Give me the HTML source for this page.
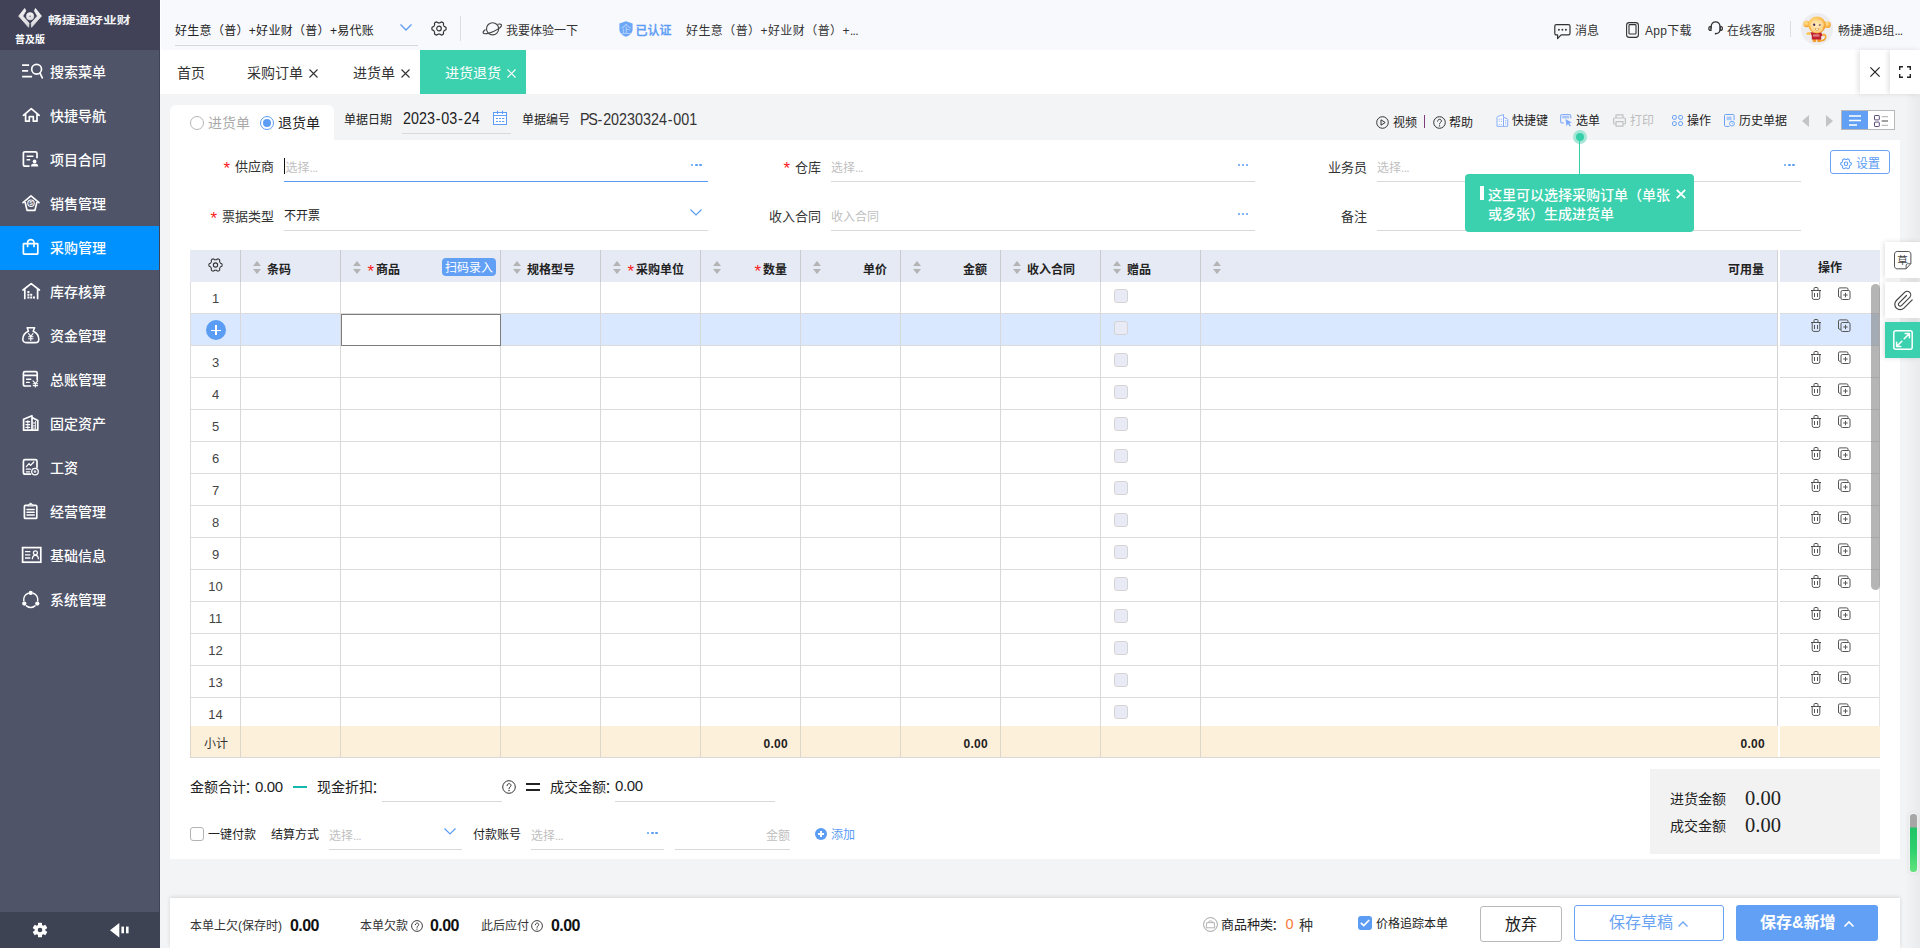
<!DOCTYPE html>
<html lang="zh-CN">
<head>
<meta charset="utf-8">
<title>进货退货 - 畅捷通好业财</title>
<style>
*{box-sizing:border-box;margin:0;padding:0}
html,body{width:1920px;height:948px;overflow:hidden}
body{position:relative;background:#f3f4f6;font-family:"Liberation Sans","Noto Sans CJK SC",sans-serif;font-size:12px;color:#333;line-height:1}
.a{position:absolute;white-space:nowrap}
svg{position:absolute;overflow:visible}
/* sidebar */
#side{position:absolute;left:0;top:0;width:160px;height:948px;background:#4f5469;border-right:1px solid #404258}
#side .logo{position:absolute;left:0;top:0;width:159px;height:50px;background:#414257}
#side .bot{position:absolute;left:0;top:912px;width:159px;height:36px;background:#3e4354}
#side .mi{position:absolute;left:0;width:160px;height:44px;color:#fff;font-size:14px;font-weight:500}
#side .mi span{position:absolute;left:50px;top:15px}
#side .mi.on{background:#0091ff;width:159px}
#side .mi svg{left:21px;top:12px;width:20px;height:20px}
/* top bar */
#top{position:absolute;left:160px;top:0;width:1760px;height:50px;background:#f8f9fd;border-left:1px solid #fff}
#tabs{position:absolute;left:160px;top:50px;width:1760px;height:44px;background:#fff}
#tabs .t{position:absolute;top:16px;font-size:14px;color:#333}
#tabs .on{position:absolute;left:260px;top:0;width:106px;height:44px;background:#3bd1ae}
/* main card */
#main{position:absolute;left:0;top:0;width:1920px;height:948px}
.card{position:absolute;background:#fff}
.lbl{margin-top:0;position:absolute;white-space:nowrap;color:#333;font-size:13px}
.ph{margin-top:2px;position:absolute;white-space:nowrap;color:#bfbfbf;font-size:12px}
.ul{position:absolute;height:1px;background:#d9d9d9}
.red{color:#f5222d}
.dots{margin-top:1px;position:absolute;width:11px;height:3px}
.dots i{position:absolute;top:0;width:2.4px;height:2.4px;border-radius:50%;background:#5b9cf5}
/* table */
#tbl{position:absolute;left:0;top:0;width:1920px;height:948px}
.thead{position:absolute;left:190px;top:250px;width:1690px;height:32px;background:#e6eaf5}
.trow{position:absolute;left:190px;width:1690px;height:32px;background:#fff;border-bottom:1px solid #dcdcdc}
.trow.hl{background:#d9e8fe}
.vl{position:absolute;top:250px;width:1px;height:507px;background:#d9d9d9}
.rn{position:absolute;left:191px;width:49px;height:32px;line-height:34px;text-align:center;font-size:13px;color:#444}
.plus{position:absolute;left:206px;width:20px;height:20px;border-radius:50%;background:#5b9cf5}
.plus i{position:absolute;left:5px;top:9.5px;width:10px;height:1.4px;background:#fff}
.plus b{position:absolute;left:9.3px;top:5px;width:1.4px;height:10px;background:#fff}
.ck{position:absolute;left:1114px;width:14px;height:14px;border:1px solid #d4d4d4;border-radius:3px;background:#e8ebf5}
.ic-trash{left:1811px;width:10px;height:13px}
.ic-copy{left:1838px;width:13px;height:13px}
.th{position:absolute;top:263.600px;font-size:12px;font-weight:700;color:#222;white-space:nowrap}
.sort{position:absolute;top:261px;width:8px;height:13px}
.sort:before{content:"";position:absolute;left:0;top:0;border:4px solid transparent;border-top:0;border-bottom:5.5px solid #b4b4b4}
.sort:after{content:"";position:absolute;left:0;top:7.5px;border:4px solid transparent;border-bottom:0;border-top:5.5px solid #b4b4b4}
/* footer */
#foot{position:absolute;left:170px;top:898px;width:1730px;height:50px;background:#fff;box-shadow:0 -1px 4px rgba(0,0,0,.12)}
.num{position:absolute;white-space:nowrap;font-size:16.500px;transform:scaleX(.868);transform-origin:0 0;color:#222}
.num i{font-style:normal;margin:0 1.050px 0 .9px}
.num b{font-weight:400;letter-spacing:-1.400px}
.st{position:absolute;font-size:17px;color:#fb1a1a;line-height:1}
.cn{margin-left:-1.500px;margin-right:1.500px}
.el{letter-spacing:-.7px}

</style>
</head>
<body>

<div id="side">
<div class="logo">
<svg style="left:18px;top:8px;width:24.200px;height:20px" viewBox="0 0 24.200 20"><defs><linearGradient id="lg1" x1="0" y1="0" x2="0" y2="1"><stop offset="0" stop-color="#f4f4f6"/><stop offset="1" stop-color="#d9d9de"/></linearGradient></defs><g fill="url(#lg1)" stroke="url(#lg1)" stroke-width="0.800" stroke-linejoin="round"><path d="M6.700 0.500L0.700 8.100l9.900 11.200.4-4.200L4.800 8.100l3-5.300z"/><path d="M17.500 0.500l6 7.600-9.900 11.200-.4-4.200 6.200-7-3-5.300z"/><circle cx="12.100" cy="8.300" r="3.700" stroke-width="0.600"/></g><circle cx="12.100" cy="8.300" r="0.750" fill="#6a6c80"/></svg>
<div class="a" style="left:48px;top:15.500px;font-size:10.300px;font-weight:700;color:#f2f2f4;transform:scaleX(1.335);transform-origin:0 0;letter-spacing:0">畅捷通好业财</div>
<div class="a" style="left:15px;top:35px;font-size:10px;font-weight:700;color:#fff">普及版</div>
</div>
<div class="mi" style="top:50px"><svg viewBox="0 0 20 20" fill="none" stroke="#fff" stroke-width="1.700"><path d="M1.100 3.100h7M1.100 8.900h6M1.100 14.700h10"/><circle cx="15.600" cy="7.300" r="4.900"/><path d="M19 11.200l2.300 4.600" stroke-linecap="round"/></svg><span>搜索菜单</span></div>
<div class="mi" style="top:94px"><svg viewBox="0 0 20 20" fill="none" stroke="#fff" stroke-width="1.700" stroke-linejoin="round" stroke-linecap="round"><path d="M2.400 9.300l7.900-6.700 7.900 6.700M4.600 8.200v7h3.700v-4.600h4v4.600H16v-7"/></svg><span>快捷导航</span></div>
<div class="mi" style="top:138px"><svg viewBox="0 0 20 20" fill="none" stroke="#fff" stroke-width="1.700" stroke-linejoin="round"><path d="M8.600 16.200H4c-1 0-1.600-.6-1.600-1.600V3.400c0-1 .6-1.600 1.600-1.600h10.400c1 0 1.600.6 1.600 1.600v4.800"/><path d="M5.600 6.200h6.800M5.600 9.800h3.600" stroke-width="1.400"/><circle cx="13.600" cy="11.400" r="1.900" fill="#fff" stroke="none"/><path d="M10 16.600c0-2.400 1.600-3 3.600-3s3.600.6 3.600 3z" fill="#fff" stroke="none"/></svg><span>项目合同</span></div>
<div class="mi" style="top:182px"><svg viewBox="0 0 20 20" fill="none" stroke="#fff" stroke-width="1.700" stroke-linejoin="round" stroke-linecap="round"><path d="M2 8.600L10 1.800l8 6.800M4.200 8.600l1.900 7.800h7.800l1.900-7.800"/><circle cx="10" cy="9.200" r="3.200" stroke-width="1.100"/><text x="10" y="11.400" font-size="5.500" font-weight="700" text-anchor="middle" fill="#fff" stroke="none" font-family="Liberation Sans,sans-serif">S</text></svg><span>销售管理</span></div>
<div class="mi on" style="top:226px"><svg viewBox="0 0 20 20" fill="none" stroke="#fff" stroke-width="1.700" stroke-linejoin="round"><rect x="2.400" y="5.600" width="14.400" height="10.600" rx="0.600"/><path d="M6.600 8.400V4.600c0-4 6.400-4 6.400 0v3.800" stroke-linecap="round"/></svg><span>采购管理</span></div>
<div class="mi" style="top:270px"><svg viewBox="0 0 20 20" fill="none" stroke="#fff" stroke-width="1.700" stroke-linejoin="round" stroke-linecap="round"><path d="M2 8l8.200-6.300L18.400 8M3.800 7.400v9M16.600 7.400v9"/><path d="M6.400 15.600h8.200M6.400 12.800h5.400M6.400 10h2.600" stroke-width="2" stroke-dasharray="2 0.800" stroke-linecap="butt"/></svg><span>库存核算</span></div>
<div class="mi" style="top:314px"><svg viewBox="0 0 20 20" fill="none" stroke="#fff" stroke-width="1.600" stroke-linejoin="round" stroke-linecap="round"><path d="M6.200 1.800h7.400l-1.400 3.400c3 1.400 5.600 4.600 5.600 8 0 2.200-1.400 3.400-3.400 3.400H5.200c-2 0-3.400-1.200-3.400-3.400 0-3.400 2.600-6.600 5.600-8z"/><path d="M7.600 7.600l2.200 2.800 2.200-2.800M9.800 10.400v4M7.600 10.800h4.400M7.600 12.800h4.400" stroke-width="1.100"/></svg><span>资金管理</span></div>
<div class="mi" style="top:358px"><svg viewBox="0 0 20 20" fill="none" stroke="#fff" stroke-width="1.700" stroke-linejoin="round" stroke-linecap="round"><path d="M9.400 16H4c-1 0-1.600-.6-1.600-1.600V3.200c0-1 .6-1.600 1.600-1.600h10.600c1 0 1.600.6 1.600 1.600v6.600M2.400 5.400h13.800"/><path d="M5.600 9.200h4.200M5.600 12.400h2.600" stroke-width="1.400"/><path d="M12 10.800l2.400 2.600 2.400-2.600M14.400 13.400v3.600M12.200 13.800h4.400M12.200 15.600h4.400" stroke-width="1.100"/></svg><span>总账管理</span></div>
<div class="mi" style="top:402px"><svg viewBox="0 0 20 20" fill="none" stroke="#fff" stroke-width="1.700" stroke-linejoin="round" stroke-linecap="round"><path d="M2.600 16.200V5.200l8.400-3.400v14.400M11 3.400l5.800 3v9.800M2.600 16.200h14.200"/><path d="M5 7.800h3.600M5 10.600h3.600M5 13.400h3.600M13 8.600v0.600M13 11.400v0.600M13 14v0.200" stroke-width="1.400"/><path d="M6.800 6.400v8.400M14.600 7.400v8" stroke-width="0.900"/></svg><span>固定资产</span></div>
<div class="mi" style="top:446px"><svg viewBox="0 0 20 20" fill="none" stroke="#fff" stroke-width="1.700" stroke-linejoin="round" stroke-linecap="round"><path d="M9.400 16.200H4c-1 0-1.600-.6-1.600-1.600V3.200c0-1 .6-1.600 1.600-1.600h10.400c1 0 1.600.6 1.600 1.600v6"/><path d="M5.400 8.600l2.600-3 1.600 1.800 3.200-3.400" stroke-width="1.300"/><path d="M5.400 11.200h4M5.400 13.800h3.200" stroke-width="1.300"/><circle cx="14" cy="13.600" r="3.300" stroke-width="1.300"/><circle cx="14" cy="13.600" r="1.300" fill="#fff" stroke="none" opacity=".8"/></svg><span>工资</span></div>
<div class="mi" style="top:490px"><svg viewBox="0 0 20 20" fill="none" stroke="#fff" stroke-width="1.700" stroke-linejoin="round" stroke-linecap="round"><path d="M6.800 3.400H4.400c-.6 0-1 .4-1 1v11c0 .6.400 1 1 1h10.400c.6 0 1-.4 1-1v-11c0-.6-.4-1-1-1h-2.400"/><path d="M6.800 3.600c0-.8.400-1.200 1.200-1.200h.4c0-1.600 2.400-1.600 2.400 0h.4c.8 0 1.200.4 1.200 1.200z" fill="#fff" stroke-width="1"/><path d="M6 7.400h7.200M6 10.200h7.200M6 13h7.200" stroke-width="1.500"/></svg><span>经营管理</span></div>
<div class="mi" style="top:534px"><svg viewBox="0 0 20 20" fill="none" stroke="#fff" stroke-width="1.700" stroke-linejoin="miter"><rect x="1.600" y="1.600" width="18.200" height="14.600"/><path d="M4 5.600h5.400M4 8.800h5.400M4 12h5.400" stroke-width="1.300"/><circle cx="14.400" cy="6.800" r="2" stroke-width="1.300"/><path d="M11.400 13.200c0-2.600 1.200-3.800 3-3.800s3 1.200 3 3.800" stroke-width="1.300"/></svg><span>基础信息</span></div>
<div class="mi" style="top:578px"><svg viewBox="0 0 20 20" fill="none" stroke="#fff" stroke-width="1.500" stroke-linecap="round"><path d="M12.200 3.200a7 7 0 0 1 4.500 7.600M14 15.800a7 7 0 0 1-8.600 0M2.800 10.800a7 7 0 0 1 4.500-7.600"/><circle cx="9.700" cy="2.900" r="2.150" fill="#fff" stroke="none"/><circle cx="3.300" cy="13.600" r="2.150" fill="#fff" stroke="none"/><circle cx="16.300" cy="13.600" r="2.150" fill="#fff" stroke="none"/></svg><span>系统管理</span></div>
<div class="bot">
<svg style="left:32.100px;top:10.300px;width:16px;height:16px" viewBox="-8 -8 16 16"><g fill="#fff"><circle r="5.400"/><rect x="-2" y="-7.300" width="4" height="4.500" rx="0.600" transform="rotate(0)"/><rect x="-2" y="-7.300" width="4" height="4.500" rx="0.600" transform="rotate(60)"/><rect x="-2" y="-7.300" width="4" height="4.500" rx="0.600" transform="rotate(120)"/><rect x="-2" y="-7.300" width="4" height="4.500" rx="0.600" transform="rotate(180)"/><rect x="-2" y="-7.300" width="4" height="4.500" rx="0.600" transform="rotate(240)"/><rect x="-2" y="-7.300" width="4" height="4.500" rx="0.600" transform="rotate(300)"/></g><circle r="2.300" fill="#3e4354"/></svg>
<svg style="left:110px;top:10.800px;width:19px;height:14.400px" viewBox="0 0 19 14.400"><path fill="#fff" d="M0 7.200L9.300 0v14.400z"/><rect x="11.400" y="3.600" width="2.600" height="6.700" fill="#fff"/><rect x="16" y="3.600" width="2.600" height="6.700" fill="#fff"/></svg>
</div>
</div>

<div id="top"><div style="position:absolute;left:-1px;top:0;width:1760px;height:50px">
<div class="a" style="left:15px;top:25px;font-size:12px;color:#222;letter-spacing:.3px">好生意（普）+好业财（普）+易代账</div>
<div class="ul" style="left:15px;top:45px;width:243px;background:#d6d8dd"></div>
<svg style="left:240px;top:24px;width:12px;height:7px" viewBox="0 0 12 7" fill="none" stroke="#5b9cf5" stroke-width="1.300"><path d="M0.500 0.500L6 6l5.500-5.500"/></svg>
<svg style="left:271px;top:21px;width:16px;height:15px" viewBox="0 0 16 15" fill="none" stroke="#333" stroke-width="1.200" stroke-linejoin="round"><path d="M15.10 7.50 L15.07 8.12 L14.88 8.71 L14.13 9.14 L13.37 9.45 L13.08 9.87 L12.85 10.30 L12.59 10.71 L12.38 11.17 L12.49 11.99 L12.49 12.85 L12.07 13.32 L11.55 13.65 L11.00 13.93 L10.39 14.07 L9.64 13.63 L8.99 13.13 L8.49 13.08 L8.00 13.10 L7.51 13.08 L7.01 13.13 L6.36 13.63 L5.61 14.07 L5.00 13.93 L4.45 13.65 L3.93 13.32 L3.51 12.85 L3.51 11.99 L3.62 11.17 L3.41 10.71 L3.15 10.30 L2.92 9.87 L2.63 9.45 L1.87 9.14 L1.12 8.71 L0.93 8.12 L0.90 7.50 L0.93 6.88 L1.12 6.29 L1.87 5.86 L2.63 5.55 L2.92 5.13 L3.15 4.70 L3.41 4.29 L3.62 3.83 L3.51 3.01 L3.51 2.15 L3.93 1.68 L4.45 1.35 L5.00 1.07 L5.61 0.93 L6.36 1.37 L7.01 1.87 L7.51 1.92 L8.00 1.90 L8.49 1.92 L8.99 1.87 L9.64 1.37 L10.39 0.93 L11.00 1.07 L11.55 1.35 L12.07 1.68 L12.49 2.15 L12.49 3.01 L12.38 3.83 L12.59 4.29 L12.85 4.70 L13.08 5.13 L13.37 5.55 L14.13 5.86 L14.88 6.29 L15.07 6.88Z" transform="translate(0 0)"/><circle cx="8" cy="7.500" r="2.300"/></svg>
<div class="a" style="left:300px;top:16px;width:1px;height:25px;background:#dcdde2"></div>
<svg style="left:322px;top:21px;width:20px;height:16px" viewBox="0 0 20 16" fill="none" stroke="#444" stroke-width="1.100"><circle cx="10.600" cy="7.800" r="6.100"/><ellipse cx="10.300" cy="7.900" rx="10" ry="2.900" transform="rotate(-24 10.300 7.900)" pathLength="100" stroke-dasharray="60 31 9"/></svg>
<div class="a" style="left:346px;top:25px;font-size:12px;color:#333">我要体验一下</div>
<svg style="left:459px;top:21px;width:14px;height:16px" viewBox="0 0 14 16"><path d="M7 0.200l6.600 2.200v5.800c0 3.400-2.600 6-6.600 7.600C3 14.200 0.400 11.600 0.400 8.200V2.400z" fill="#6ca6f6"/><text x="7" y="12" font-size="10.500" font-weight="400" text-anchor="middle" fill="#fff" fill-opacity=".55" font-family="Liberation Sans,Noto Sans CJK SC,sans-serif">企</text></svg>
<div class="a" style="left:475.500px;top:25px;font-size:12px;font-weight:500;color:#5b9cf5;-webkit-text-stroke:.3px #5b9cf5">已认证</div>
<div class="a" style="left:526px;top:25px;font-size:12px;color:#333;letter-spacing:.42px">好生意（普）+好业财（普）+<span class="el">...</span></div>

<svg style="left:1394px;top:24px;width:17px;height:16px" viewBox="0 0 17 16" fill="none" stroke="#333" stroke-width="1.200" stroke-linejoin="round"><path d="M2.400 0.700h12c1 0 1.600.6 1.600 1.600v7c0 1-.6 1.600-1.600 1.600H7.200l-3.600 3.600V10.900H2.400c-1 0-1.600-.6-1.600-1.600v-7c0-1 .6-1.600 1.600-1.600z"/><circle cx="4.900" cy="5.800" r="0.950" fill="#333" stroke="none"/><circle cx="8.400" cy="5.800" r="0.950" fill="#333" stroke="none"/><circle cx="11.900" cy="5.800" r="0.950" fill="#333" stroke="none"/></svg>
<div class="a" style="left:1415px;top:25px;font-size:12px;color:#333">消息</div>
<svg style="left:1465.500px;top:22px;width:13px;height:16px" viewBox="0 0 13 16" fill="none" stroke="#333" stroke-width="1.100"><rect x="0.600" y="0.600" width="11.800" height="14.800" rx="2.600"/><rect x="3" y="2.600" width="7" height="9.400" rx="0.800"/></svg>
<div class="a" style="left:1485px;top:25px;font-size:12px;color:#333;letter-spacing:.3px">App下载</div>
<svg style="left:1548px;top:21px;width:15px;height:14px" viewBox="0 0 15 14" fill="none" stroke="#333" stroke-width="1.200" stroke-linecap="round"><path d="M3.200 7.200V5.400c0-6 8.800-6 8.800 0v3.400c0 2.400-1.600 3.600-4 3.800"/><path d="M3 5.400c-1.400 0-2.200.8-2.200 2s.8 2 2.200 2zM12.200 5.400c1.400 0 2.200.8 2.200 2s-.8 2-2.200 2z"/><circle cx="7.600" cy="12.600" r="0.900" fill="#333" stroke="none"/></svg>
<div class="a" style="left:1567px;top:25px;font-size:12px;color:#333">在线客服</div>
<div class="a" style="left:1630px;top:21px;width:1px;height:16px;background:#dcdde2"></div>
<svg style="left:1641px;top:13px;width:32px;height:32px" viewBox="0 0 32 32">
<defs><radialGradient id="mk1" cx=".4" cy=".35" r=".7"><stop offset="0" stop-color="#ffe39a"/><stop offset=".6" stop-color="#fbbd4e"/><stop offset="1" stop-color="#ee9426"/></radialGradient><radialGradient id="mk2" cx=".45" cy=".4" r=".7"><stop offset="0" stop-color="#ffeec0"/><stop offset="1" stop-color="#fbc976"/></radialGradient></defs>
<circle cx="16" cy="16" r="16" fill="#ededf0"/>
<g transform="translate(0 -0.600)"><circle cx="5.700" cy="11.600" r="3.300" fill="url(#mk1)"/><circle cx="26.500" cy="12.300" r="3.300" fill="url(#mk1)"/>
<path d="M18.600 28c4 1 6.600-1.200 6-4.400-.3-1.600-2.200-2-2.800-.8" stroke="#f3a535" stroke-width="1.800" fill="none" stroke-linecap="round"/>
<path d="M11.600 26.600h3.600v2.600c0 .8-3.600.8-3.600 0zM16.200 26.600h3.600v2.600c0 .8-3.600.8-3.600 0z" fill="#f29b2c"/>
<path d="M9.400 20.400c-1.600-.6-3-.6-3.800.2-.6.800 0 1.800 1.200 1.800l2.800.2z" fill="#fbc54a"/>
<path d="M9.400 19.800h11l.8 3.400-1 .6v3.200H10.800v-3.400z" fill="#c01f2c"/>
<ellipse cx="16" cy="12.600" rx="8.800" ry="8.400" fill="url(#mk1)"/>
<path d="M9.200 12.400c0-3 2.600-4.800 4.800-4.600 1 .1 1.600.6 2 1.200.4-.6 1-1.100 2-1.200 2.200-.2 4.800 1.600 4.800 4.600 0 1.200-.4 2-1 2.600.6 3-2.200 5.200-5.800 5.200s-6.400-2.200-5.800-5.200c-.6-.6-1-1.400-1-2.600z" fill="url(#mk2)"/>
<ellipse cx="13.200" cy="12.300" rx="1.100" ry="1.200" fill="#4a2a5a"/><ellipse cx="18.800" cy="12.600" rx="1.100" ry=".8" fill="#6a4a6a"/>
<path d="M13.800 16.200c.8 2.400 3.600 2.400 4.400 0z" fill="#d9781c"/><rect x="15" y="16.200" width="2" height="1.200" fill="#fff"/>
<rect x="12" y="22" width="6.400" height="2.200" fill="#e9a0a8" opacity=".75"/></g>
</svg>
<div class="a" style="left:1678px;top:25px;font-size:12px;color:#333;letter-spacing:.1px">畅捷通B组<span class="el">...</span></div>
</div></div>

<div id="tabs">
<div class="t" style="left:17px">首页</div>
<div class="t" style="left:87px">采购订单</div>
<svg style="left:149px;top:19.300px;width:9px;height:9px" viewBox="0 0 9 9" stroke="#333" stroke-width="1.100"><path d="M0.500 0.500l8 8M8.500 0.500l-8 8"/></svg>
<div class="t" style="left:193px">进货单</div>
<svg style="left:240.500px;top:19.300px;width:9px;height:9px" viewBox="0 0 9 9" stroke="#333" stroke-width="1.100"><path d="M0.500 0.500l8 8M8.500 0.500l-8 8"/></svg>
<div class="on"></div>
<div class="t" style="left:285px;color:#fff">进货退货</div>
<svg style="left:347px;top:19.300px;width:9px;height:9px" viewBox="0 0 9 9" stroke="#fff" stroke-width="1.100"><path d="M0.500 0.500l8 8M8.500 0.500l-8 8"/></svg>
<div class="a" style="left:1700px;top:0;width:30px;height:44px;background:#fff;box-shadow:-2px 0 5px rgba(0,0,0,.11)"></div>
<div class="a" style="left:1730px;top:0;width:30px;height:44px;background:#fff;box-shadow:-2px 0 5px rgba(0,0,0,.11)"></div>
<svg style="left:1710px;top:17px;width:10px;height:10px" viewBox="0 0 10 10" stroke="#222" stroke-width="1.200"><path d="M0.400 0.400l9.200 9.200M9.600 0.400l-9.200 9.200"/></svg>
<svg style="left:1739px;top:16px;width:12px;height:12px" viewBox="0 0 12 12" fill="none" stroke="#222" stroke-width="1.400"><path d="M0.700 4V0.700H4M8 0.700h3.300V4M11.300 8v3.300H8M4 11.300H0.700V8"/></svg>
</div>

<div id="main">
<div class="a" style="left:1904px;top:94px;width:16px;height:854px;background:linear-gradient(to right,rgba(0,0,0,0),rgba(0,0,0,.04))"></div>
<!-- card -->
<div class="card" style="left:170px;top:105px;width:164px;height:40px;border-radius:6px 6px 0 0"></div>
<div class="card" style="left:170px;top:140px;width:1730px;height:719px"></div>
<!-- radios -->
<div class="a" style="left:190px;top:116px;width:14px;height:14px;border:1px solid #b5b5b5;border-radius:50%;background:#fff"></div>
<div class="a" style="left:208px;top:116px;font-size:14px;color:#aaa">进货单</div>
<div class="a" style="left:260px;top:116px;width:14px;height:14px;border:1px solid #5b9cf5;border-radius:50%;background:#fff"></div>
<div class="a" style="left:263px;top:119px;width:8px;height:8px;border-radius:50%;background:#5b9cf5"></div>
<div class="a" style="left:278px;top:116px;font-size:14px;color:#222">退货单</div>
<!-- date / code -->
<div class="a" style="left:344px;top:114px;font-size:12px;color:#222">单据日期</div>
<div class="num" style="left:403px;top:110px">2023<i>-</i>03<i>-</i>24</div>
<div class="ul" style="left:402px;top:133px;width:109px"></div>
<svg style="left:493px;top:110px;width:14px;height:15px" viewBox="0 0 14 15" fill="none" stroke="#5f9df5" stroke-width="1"><rect x="0.500" y="2.500" width="13" height="12" fill="#fff"/><path d="M0.500 5.500h13"/><path d="M4.500 0.800v3.200M9.500 0.800v3.200" stroke-width="1.100"/><path d="M3 8.500h2M6 8.500h2M9 8.500h2.300M3 11.500h2M6 11.500h2M9 11.500h2.300"/></svg>
<div class="a" style="left:522px;top:114px;font-size:12px;color:#222">单据编号</div>
<div class="num" style="left:580px;top:111px;color:#333"><b>PS</b><i>-</i>20230324<i>-</i>001</div>
<!-- toolbar right -->
<svg style="left:1376px;top:115.500px;width:13px;height:13px" viewBox="0 0 13 13" fill="none" stroke="#333" stroke-width="1"><circle cx="6.500" cy="6.500" r="5.800"/><path d="M5 3.800v5.400l4.200-2.700z" stroke-linejoin="round"/></svg>
<div class="a" style="left:1393px;top:117px;font-size:12px;color:#222">视频</div>
<div class="a" style="left:1424px;top:115px;width:1px;height:13px;background:#7a3b78"></div>
<svg style="left:1432.500px;top:115.500px;width:13px;height:13px" viewBox="0 0 13 13" fill="none" stroke="#333" stroke-width="1"><circle cx="6.500" cy="6.500" r="5.800"/><path d="M4.600 5.200c0-2.600 3.800-2.600 3.800-.2 0 1.400-1.900 1.500-1.900 3" stroke-linecap="round"/><circle cx="6.500" cy="9.900" r="0.700" fill="#333" stroke="none"/></svg>
<div class="a" style="left:1449px;top:117px;font-size:12px;color:#222">帮助</div>

<svg style="left:1496px;top:114px;width:12.500px;height:13px" viewBox="0 0 12.500 13" fill="none" stroke="#86aef8" stroke-width="1" stroke-linejoin="round"><path d="M1 12.300V3.600Q1 2.800 1.800 2.500L7.500 0.600V3.300L11.200 4.800Q11.700 5 11.700 5.500V12.300Z" fill="#fff"/><path d="M7.500 3.300V12.300"/><path d="M3.200 4.600v4M5.300 4.600v4" stroke-dasharray="1.300 0.700" stroke-width="0.900"/><path d="M2.600 10.300h3.400" stroke-dasharray="1.200 0.900" stroke-width="0.900"/><path d="M9 6.600h1.400M9 8.300h1.400M9 10h1.400" stroke-width="0.800"/></svg>
<div class="a" style="left:1512px;top:114.500px;font-size:12px;color:#222">快捷键</div>
<svg style="left:1560px;top:114px;width:12.500px;height:13px" viewBox="0 0 12.500 13" fill="none" stroke="#86aef8" stroke-width="1.100" stroke-linejoin="round"><path d="M3.700 8.900H2.100Q0.600 8.900 0.600 7.400V2Q0.600 0.500 2.100 0.500H9.300Q10.800 0.500 10.800 2V4.600"/><rect x="2.100" y="1.700" width="7.200" height="2.700" fill="#a9c4fb" stroke="none"/><path d="M5.500 4.900l6.300 3.500-2.500.9 1.700 2.500-1.200.8-1.700-2.500-1.700 1.900z" fill="#7faaf8" stroke="none"/></svg>
<div class="a" style="left:1576px;top:114.500px;font-size:12px;color:#222">选单</div>
<svg style="left:1613px;top:114px;width:13px;height:13px" viewBox="0 0 13 13" fill="none" stroke="#c2c2c2" stroke-width="1.200" stroke-linejoin="round"><path d="M3 4V0.800h7V4M3 10H1.600C1 10 .6 9.600.6 9V5c0-.6.400-1 1-1h9.800c.6 0 1 .4 1 1v4c0 .6-.4 1-1 1H10"/><rect x="3" y="7.600" width="7" height="4.600"/></svg>
<div class="a" style="left:1630px;top:114.500px;font-size:12px;color:#bdbdbd">打印</div>
<svg style="left:1671.500px;top:115px;width:11px;height:11px" viewBox="0 0 11 11" fill="none" stroke="#6aa3f4" stroke-width="1"><rect x="0.500" y="0.500" width="3.800" height="3.800" rx="1.300"/><rect x="6.700" y="0.500" width="3.800" height="3.800" rx="1.300"/><rect x="0.500" y="6.700" width="3.800" height="3.800" rx="1.300"/><rect x="6.700" y="6.700" width="3.800" height="3.800" rx="1.300"/></svg>
<div class="a" style="left:1687px;top:114.500px;font-size:12px;color:#222">操作</div>
<svg style="left:1724px;top:114px;width:11px;height:13px" viewBox="0 0 11 13" fill="none" stroke="#6aa3f4" stroke-width="1" stroke-linejoin="round"><path d="M5.400 12.400H1.400c-.5 0-.9-.4-.9-.9V1.400c0-.5.400-.9.900-.9h7.800c.5 0 .9.400.9.900v4.800"/><path d="M2.600 2.600h5v3.600h-5z" fill="#a9c8f8" stroke="none"/><circle cx="8" cy="9.600" r="2.400" fill="#fff"/><path d="M8 8.300v1.500h1.200" stroke-width="0.800"/></svg>
<div class="a" style="left:1739px;top:114.500px;font-size:12px;color:#222">历史单据</div>
<svg style="left:1802px;top:114.500px;width:7px;height:12px" viewBox="0 0 7 12"><path d="M7 0v12L0 6z" fill="#c4c4c4"/></svg>
<svg style="left:1826px;top:114.500px;width:7px;height:12px" viewBox="0 0 7 12"><path d="M0 0v12L7 6z" fill="#c4c4c4"/></svg>
<div class="a" style="left:1841px;top:109.500px;width:54px;height:20.500px;border:1px solid #b8b8b8;background:#fff"></div>
<div class="a" style="left:1842px;top:110.500px;width:26px;height:18.500px;background:#62a0f6"></div>
<svg style="left:1849px;top:115px;width:12px;height:11px" viewBox="0 0 12 11" stroke="#fff" stroke-width="1.300"><path d="M0 1h12M0 5.500h12M0 10h8"/></svg>
<svg style="left:1874px;top:114.500px;width:14px;height:12px" viewBox="0 0 14 12" fill="none" stroke="#5a4a78" stroke-width="1"><rect x="0.500" y="0.500" width="4.800" height="4.400" rx="0.600"/><rect x="0.500" y="7.100" width="4.800" height="4.400" rx="0.600"/><path d="M7.700 1.700h6.300M7.700 10.300h6.300" stroke="#bdbdbd" stroke-width="1.200"/><path d="M7.700 6h6.300" stroke="#444" stroke-width="1"/></svg>

<!-- form row 1 -->
<div class="st" style="left:223.400px;top:160.300px">*</div>
<div class="lbl" style="left:235px;top:160px">供应商</div>
<div class="a" style="left:284px;top:158px;width:1px;height:16px;background:#111"></div>
<div class="ph" style="left:285.500px;top:160px">选择<span class="el">...</span></div>
<div class="ul" style="left:284px;top:181px;width:424px;background:#5b9cf5"></div>
<div class="dots" style="left:691px;top:163px"><i style="left:0"></i><i style="left:4.200px"></i><i style="left:8.400px"></i></div>

<div class="st" style="left:783.400px;top:160.300px">*</div>
<div class="lbl" style="left:795px;top:161px">仓库</div>
<div class="ph" style="left:831px;top:160px">选择<span class="el">...</span></div>
<div class="ul" style="left:831px;top:181px;width:424px"></div>
<div class="dots" style="left:1237.500px;top:163px"><i style="left:0"></i><i style="left:4.200px"></i><i style="left:8.400px"></i></div>

<div class="lbl" style="left:1328px;top:161px">业务员</div>
<div class="ph" style="left:1377px;top:160px">选择<span class="el">...</span></div>
<div class="ul" style="left:1377px;top:181px;width:424px"></div>
<div class="dots" style="left:1784px;top:163px"><i style="left:0"></i><i style="left:4.200px"></i><i style="left:8.400px"></i></div>

<div class="a" style="left:1830px;top:150px;width:60px;height:24px;border:1px solid #6aa3f4;border-radius:3px;background:#fff"></div>
<svg style="left:1840px;top:157.500px;width:12px;height:11.500px" viewBox="0 0 16 15" fill="none" stroke="#5b9cf5" stroke-width="1.400" stroke-linejoin="round"><path d="M15.10 7.50 L15.07 8.12 L14.88 8.71 L14.13 9.14 L13.37 9.45 L13.08 9.87 L12.85 10.30 L12.59 10.71 L12.38 11.17 L12.49 11.99 L12.49 12.85 L12.07 13.32 L11.55 13.65 L11.00 13.93 L10.39 14.07 L9.64 13.63 L8.99 13.13 L8.49 13.08 L8.00 13.10 L7.51 13.08 L7.01 13.13 L6.36 13.63 L5.61 14.07 L5.00 13.93 L4.45 13.65 L3.93 13.32 L3.51 12.85 L3.51 11.99 L3.62 11.17 L3.41 10.71 L3.15 10.30 L2.92 9.87 L2.63 9.45 L1.87 9.14 L1.12 8.71 L0.93 8.12 L0.90 7.50 L0.93 6.88 L1.12 6.29 L1.87 5.86 L2.63 5.55 L2.92 5.13 L3.15 4.70 L3.41 4.29 L3.62 3.83 L3.51 3.01 L3.51 2.15 L3.93 1.68 L4.45 1.35 L5.00 1.07 L5.61 0.93 L6.36 1.37 L7.01 1.87 L7.51 1.92 L8.00 1.90 L8.49 1.92 L8.99 1.87 L9.64 1.37 L10.39 0.93 L11.00 1.07 L11.55 1.35 L12.07 1.68 L12.49 2.15 L12.49 3.01 L12.38 3.83 L12.59 4.29 L12.85 4.70 L13.08 5.13 L13.37 5.55 L14.13 5.86 L14.88 6.29 L15.07 6.88Z"/><circle cx="8" cy="7.500" r="2.300"/></svg>
<div class="a" style="left:1856px;top:157.500px;font-size:12px;color:#5b9cf5">设置</div>

<!-- form row 2 -->
<div class="st" style="left:210.500px;top:209.900px">*</div>
<div class="lbl" style="left:222px;top:210px">票据类型</div>
<div class="a" style="left:284px;top:210px;font-size:12px;color:#222">不开票</div>
<div class="ul" style="left:284px;top:230px;width:424px"></div>
<svg style="left:690px;top:209px;width:12px;height:7px" viewBox="0 0 12 7" fill="none" stroke="#5b9cf5" stroke-width="1.200"><path d="M0.500 0.500L6 6l5.500-5.500"/></svg>

<div class="lbl" style="left:769px;top:210px">收入合同</div>
<div class="ph" style="left:831px;top:209px">收入合同</div>
<div class="ul" style="left:831px;top:230px;width:424px"></div>
<div class="dots" style="left:1237.500px;top:212px"><i style="left:0"></i><i style="left:4.200px"></i><i style="left:8.400px"></i></div>

<div class="lbl" style="left:1341px;top:210px">备注</div>
<div class="ul" style="left:1377px;top:230px;width:424px"></div>

<!-- guide tooltip -->
<div class="a" style="left:1573px;top:130px;width:14px;height:14px;border-radius:50%;background:#a5e7d6"></div>
<div class="a" style="left:1576px;top:133px;width:8px;height:8px;border-radius:50%;background:#36cfa9"></div>
<div class="a" style="left:1579px;top:141px;width:1px;height:34px;background:#36cfa9"></div>
<div class="a" style="left:1465px;top:174px;width:229px;height:58px;border-radius:4px;background:#3bd1ae"></div>
<div class="a" style="left:1480px;top:186px;width:3.500px;height:14px;background:#fff"></div>
<div class="a" style="left:1488px;top:185.500px;font-size:14px;font-weight:500;color:#fff;line-height:19px;white-space:normal;width:200px;letter-spacing:0">这里可以选择采购订单（单张<br>或多张）生成进货单</div>
<svg style="left:1676px;top:188.500px;width:10px;height:10px" viewBox="0 0 10 10" stroke="#fff" stroke-width="1.800"><path d="M0.800 0.800l8.400 8.400M9.200 0.800L0.800 9.200"/></svg>

<div id="tbl">
<div class="thead"></div>
<div class="trow" style="top:282px"></div>
<div class="rn" style="top:282px">1</div>
<div class="ck" style="top:289px"></div>
<svg class="ic-trash" style="top:287px" viewBox="0 0 10 13"><g fill="none" stroke="#555" stroke-width="1" stroke-linecap="butt" stroke-linejoin="round"><path d="M0 3.500h10M3 3.500V1.600Q3 0.500 4 0.500h2Q7 0.500 7 1.600V3.500M1.200 3.500v7.200q0 1.700 1.700 1.700h4.200q1.700 0 1.700-1.700V3.500M3.500 6v4M6.500 6v4"/></g></svg>
<svg class="ic-copy" style="top:287px" viewBox="0 0 13 13"><g fill="none" stroke="#555" stroke-width="1" stroke-linecap="butt" stroke-linejoin="round"><rect x="3" y="3.500" width="9" height="9" rx="1.400"/><path d="M2.700 10.300H1.800Q0.500 10.300 0.500 9V2.200Q0.500 0.900 1.800 0.900h6.900Q10 0.900 10 2.200v1M7.500 5.800v4.400M5.300 8h4.400"/></g></svg>
<div class="trow hl" style="top:314px"></div>
<div class="plus" style="top:320px"><i></i><b></b></div>
<div class="ck" style="top:321px"></div>
<svg class="ic-trash" style="top:319px" viewBox="0 0 10 13"><g fill="none" stroke="#555" stroke-width="1" stroke-linecap="butt" stroke-linejoin="round"><path d="M0 3.500h10M3 3.500V1.600Q3 0.500 4 0.500h2Q7 0.500 7 1.600V3.500M1.200 3.500v7.200q0 1.700 1.700 1.700h4.200q1.700 0 1.700-1.700V3.500M3.500 6v4M6.500 6v4"/></g></svg>
<svg class="ic-copy" style="top:319px" viewBox="0 0 13 13"><g fill="none" stroke="#555" stroke-width="1" stroke-linecap="butt" stroke-linejoin="round"><rect x="3" y="3.500" width="9" height="9" rx="1.400"/><path d="M2.700 10.300H1.800Q0.500 10.300 0.500 9V2.200Q0.500 0.900 1.800 0.900h6.900Q10 0.900 10 2.200v1M7.500 5.800v4.400M5.300 8h4.400"/></g></svg>
<div class="trow" style="top:346px"></div>
<div class="rn" style="top:346px">3</div>
<div class="ck" style="top:353px"></div>
<svg class="ic-trash" style="top:351px" viewBox="0 0 10 13"><g fill="none" stroke="#555" stroke-width="1" stroke-linecap="butt" stroke-linejoin="round"><path d="M0 3.500h10M3 3.500V1.600Q3 0.500 4 0.500h2Q7 0.500 7 1.600V3.500M1.200 3.500v7.200q0 1.700 1.700 1.700h4.200q1.700 0 1.700-1.700V3.500M3.500 6v4M6.500 6v4"/></g></svg>
<svg class="ic-copy" style="top:351px" viewBox="0 0 13 13"><g fill="none" stroke="#555" stroke-width="1" stroke-linecap="butt" stroke-linejoin="round"><rect x="3" y="3.500" width="9" height="9" rx="1.400"/><path d="M2.700 10.300H1.800Q0.500 10.300 0.500 9V2.200Q0.500 0.900 1.800 0.900h6.900Q10 0.900 10 2.200v1M7.500 5.800v4.400M5.300 8h4.400"/></g></svg>
<div class="trow" style="top:378px"></div>
<div class="rn" style="top:378px">4</div>
<div class="ck" style="top:385px"></div>
<svg class="ic-trash" style="top:383px" viewBox="0 0 10 13"><g fill="none" stroke="#555" stroke-width="1" stroke-linecap="butt" stroke-linejoin="round"><path d="M0 3.500h10M3 3.500V1.600Q3 0.500 4 0.500h2Q7 0.500 7 1.600V3.500M1.200 3.500v7.200q0 1.700 1.700 1.700h4.200q1.700 0 1.700-1.700V3.500M3.500 6v4M6.500 6v4"/></g></svg>
<svg class="ic-copy" style="top:383px" viewBox="0 0 13 13"><g fill="none" stroke="#555" stroke-width="1" stroke-linecap="butt" stroke-linejoin="round"><rect x="3" y="3.500" width="9" height="9" rx="1.400"/><path d="M2.700 10.300H1.800Q0.500 10.300 0.500 9V2.200Q0.500 0.900 1.800 0.900h6.900Q10 0.900 10 2.200v1M7.500 5.800v4.400M5.300 8h4.400"/></g></svg>
<div class="trow" style="top:410px"></div>
<div class="rn" style="top:410px">5</div>
<div class="ck" style="top:417px"></div>
<svg class="ic-trash" style="top:415px" viewBox="0 0 10 13"><g fill="none" stroke="#555" stroke-width="1" stroke-linecap="butt" stroke-linejoin="round"><path d="M0 3.500h10M3 3.500V1.600Q3 0.500 4 0.500h2Q7 0.500 7 1.600V3.500M1.200 3.500v7.200q0 1.700 1.700 1.700h4.200q1.700 0 1.700-1.700V3.500M3.500 6v4M6.500 6v4"/></g></svg>
<svg class="ic-copy" style="top:415px" viewBox="0 0 13 13"><g fill="none" stroke="#555" stroke-width="1" stroke-linecap="butt" stroke-linejoin="round"><rect x="3" y="3.500" width="9" height="9" rx="1.400"/><path d="M2.700 10.300H1.800Q0.500 10.300 0.500 9V2.200Q0.500 0.900 1.800 0.900h6.900Q10 0.900 10 2.200v1M7.500 5.800v4.400M5.300 8h4.400"/></g></svg>
<div class="trow" style="top:442px"></div>
<div class="rn" style="top:442px">6</div>
<div class="ck" style="top:449px"></div>
<svg class="ic-trash" style="top:447px" viewBox="0 0 10 13"><g fill="none" stroke="#555" stroke-width="1" stroke-linecap="butt" stroke-linejoin="round"><path d="M0 3.500h10M3 3.500V1.600Q3 0.500 4 0.500h2Q7 0.500 7 1.600V3.500M1.200 3.500v7.200q0 1.700 1.700 1.700h4.200q1.700 0 1.700-1.700V3.500M3.500 6v4M6.500 6v4"/></g></svg>
<svg class="ic-copy" style="top:447px" viewBox="0 0 13 13"><g fill="none" stroke="#555" stroke-width="1" stroke-linecap="butt" stroke-linejoin="round"><rect x="3" y="3.500" width="9" height="9" rx="1.400"/><path d="M2.700 10.300H1.800Q0.500 10.300 0.500 9V2.200Q0.500 0.900 1.800 0.900h6.900Q10 0.900 10 2.200v1M7.500 5.800v4.400M5.300 8h4.400"/></g></svg>
<div class="trow" style="top:474px"></div>
<div class="rn" style="top:474px">7</div>
<div class="ck" style="top:481px"></div>
<svg class="ic-trash" style="top:479px" viewBox="0 0 10 13"><g fill="none" stroke="#555" stroke-width="1" stroke-linecap="butt" stroke-linejoin="round"><path d="M0 3.500h10M3 3.500V1.600Q3 0.500 4 0.500h2Q7 0.500 7 1.600V3.500M1.200 3.500v7.200q0 1.700 1.700 1.700h4.200q1.700 0 1.700-1.700V3.500M3.500 6v4M6.500 6v4"/></g></svg>
<svg class="ic-copy" style="top:479px" viewBox="0 0 13 13"><g fill="none" stroke="#555" stroke-width="1" stroke-linecap="butt" stroke-linejoin="round"><rect x="3" y="3.500" width="9" height="9" rx="1.400"/><path d="M2.700 10.300H1.800Q0.500 10.300 0.500 9V2.200Q0.500 0.900 1.800 0.900h6.900Q10 0.900 10 2.200v1M7.500 5.800v4.400M5.300 8h4.400"/></g></svg>
<div class="trow" style="top:506px"></div>
<div class="rn" style="top:506px">8</div>
<div class="ck" style="top:513px"></div>
<svg class="ic-trash" style="top:511px" viewBox="0 0 10 13"><g fill="none" stroke="#555" stroke-width="1" stroke-linecap="butt" stroke-linejoin="round"><path d="M0 3.500h10M3 3.500V1.600Q3 0.500 4 0.500h2Q7 0.500 7 1.600V3.500M1.200 3.500v7.200q0 1.700 1.700 1.700h4.200q1.700 0 1.700-1.700V3.500M3.500 6v4M6.500 6v4"/></g></svg>
<svg class="ic-copy" style="top:511px" viewBox="0 0 13 13"><g fill="none" stroke="#555" stroke-width="1" stroke-linecap="butt" stroke-linejoin="round"><rect x="3" y="3.500" width="9" height="9" rx="1.400"/><path d="M2.700 10.300H1.800Q0.500 10.300 0.500 9V2.200Q0.500 0.900 1.800 0.900h6.900Q10 0.900 10 2.200v1M7.500 5.800v4.400M5.300 8h4.400"/></g></svg>
<div class="trow" style="top:538px"></div>
<div class="rn" style="top:538px">9</div>
<div class="ck" style="top:545px"></div>
<svg class="ic-trash" style="top:543px" viewBox="0 0 10 13"><g fill="none" stroke="#555" stroke-width="1" stroke-linecap="butt" stroke-linejoin="round"><path d="M0 3.500h10M3 3.500V1.600Q3 0.500 4 0.500h2Q7 0.500 7 1.600V3.500M1.200 3.500v7.200q0 1.700 1.700 1.700h4.200q1.700 0 1.700-1.700V3.500M3.500 6v4M6.500 6v4"/></g></svg>
<svg class="ic-copy" style="top:543px" viewBox="0 0 13 13"><g fill="none" stroke="#555" stroke-width="1" stroke-linecap="butt" stroke-linejoin="round"><rect x="3" y="3.500" width="9" height="9" rx="1.400"/><path d="M2.700 10.300H1.800Q0.500 10.300 0.500 9V2.200Q0.500 0.900 1.800 0.900h6.900Q10 0.900 10 2.200v1M7.500 5.800v4.400M5.300 8h4.400"/></g></svg>
<div class="trow" style="top:570px"></div>
<div class="rn" style="top:570px">10</div>
<div class="ck" style="top:577px"></div>
<svg class="ic-trash" style="top:575px" viewBox="0 0 10 13"><g fill="none" stroke="#555" stroke-width="1" stroke-linecap="butt" stroke-linejoin="round"><path d="M0 3.500h10M3 3.500V1.600Q3 0.500 4 0.500h2Q7 0.500 7 1.600V3.500M1.200 3.500v7.200q0 1.700 1.700 1.700h4.200q1.700 0 1.700-1.700V3.500M3.500 6v4M6.500 6v4"/></g></svg>
<svg class="ic-copy" style="top:575px" viewBox="0 0 13 13"><g fill="none" stroke="#555" stroke-width="1" stroke-linecap="butt" stroke-linejoin="round"><rect x="3" y="3.500" width="9" height="9" rx="1.400"/><path d="M2.700 10.300H1.800Q0.500 10.300 0.500 9V2.200Q0.500 0.900 1.800 0.900h6.900Q10 0.900 10 2.200v1M7.500 5.800v4.400M5.300 8h4.400"/></g></svg>
<div class="trow" style="top:602px"></div>
<div class="rn" style="top:602px">11</div>
<div class="ck" style="top:609px"></div>
<svg class="ic-trash" style="top:607px" viewBox="0 0 10 13"><g fill="none" stroke="#555" stroke-width="1" stroke-linecap="butt" stroke-linejoin="round"><path d="M0 3.500h10M3 3.500V1.600Q3 0.500 4 0.500h2Q7 0.500 7 1.600V3.500M1.200 3.500v7.200q0 1.700 1.700 1.700h4.200q1.700 0 1.700-1.700V3.500M3.500 6v4M6.500 6v4"/></g></svg>
<svg class="ic-copy" style="top:607px" viewBox="0 0 13 13"><g fill="none" stroke="#555" stroke-width="1" stroke-linecap="butt" stroke-linejoin="round"><rect x="3" y="3.500" width="9" height="9" rx="1.400"/><path d="M2.700 10.300H1.800Q0.500 10.300 0.500 9V2.200Q0.500 0.900 1.800 0.900h6.900Q10 0.900 10 2.200v1M7.500 5.800v4.400M5.300 8h4.400"/></g></svg>
<div class="trow" style="top:634px"></div>
<div class="rn" style="top:634px">12</div>
<div class="ck" style="top:641px"></div>
<svg class="ic-trash" style="top:639px" viewBox="0 0 10 13"><g fill="none" stroke="#555" stroke-width="1" stroke-linecap="butt" stroke-linejoin="round"><path d="M0 3.500h10M3 3.500V1.600Q3 0.500 4 0.500h2Q7 0.500 7 1.600V3.500M1.200 3.500v7.200q0 1.700 1.700 1.700h4.200q1.700 0 1.700-1.700V3.500M3.500 6v4M6.500 6v4"/></g></svg>
<svg class="ic-copy" style="top:639px" viewBox="0 0 13 13"><g fill="none" stroke="#555" stroke-width="1" stroke-linecap="butt" stroke-linejoin="round"><rect x="3" y="3.500" width="9" height="9" rx="1.400"/><path d="M2.700 10.300H1.800Q0.500 10.300 0.500 9V2.200Q0.500 0.900 1.800 0.900h6.900Q10 0.900 10 2.200v1M7.500 5.800v4.400M5.300 8h4.400"/></g></svg>
<div class="trow" style="top:666px"></div>
<div class="rn" style="top:666px">13</div>
<div class="ck" style="top:673px"></div>
<svg class="ic-trash" style="top:671px" viewBox="0 0 10 13"><g fill="none" stroke="#555" stroke-width="1" stroke-linecap="butt" stroke-linejoin="round"><path d="M0 3.500h10M3 3.500V1.600Q3 0.500 4 0.500h2Q7 0.500 7 1.600V3.500M1.200 3.500v7.200q0 1.700 1.700 1.700h4.200q1.700 0 1.700-1.700V3.500M3.500 6v4M6.500 6v4"/></g></svg>
<svg class="ic-copy" style="top:671px" viewBox="0 0 13 13"><g fill="none" stroke="#555" stroke-width="1" stroke-linecap="butt" stroke-linejoin="round"><rect x="3" y="3.500" width="9" height="9" rx="1.400"/><path d="M2.700 10.300H1.800Q0.500 10.300 0.500 9V2.200Q0.500 0.900 1.800 0.900h6.900Q10 0.900 10 2.200v1M7.500 5.800v4.400M5.300 8h4.400"/></g></svg>
<div class="trow" style="top:698px"></div>
<div class="rn" style="top:698px">14</div>
<div class="ck" style="top:705px"></div>
<svg class="ic-trash" style="top:703px" viewBox="0 0 10 13"><g fill="none" stroke="#555" stroke-width="1" stroke-linecap="butt" stroke-linejoin="round"><path d="M0 3.500h10M3 3.500V1.600Q3 0.500 4 0.500h2Q7 0.500 7 1.600V3.500M1.200 3.500v7.200q0 1.700 1.700 1.700h4.200q1.700 0 1.700-1.700V3.500M3.500 6v4M6.500 6v4"/></g></svg>
<svg class="ic-copy" style="top:703px" viewBox="0 0 13 13"><g fill="none" stroke="#555" stroke-width="1" stroke-linecap="butt" stroke-linejoin="round"><rect x="3" y="3.500" width="9" height="9" rx="1.400"/><path d="M2.700 10.300H1.800Q0.500 10.300 0.500 9V2.200Q0.500 0.900 1.800 0.900h6.900Q10 0.900 10 2.200v1M7.500 5.800v4.400M5.300 8h4.400"/></g></svg>
<div class="vl" style="left:240px"></div>
<div class="vl" style="left:340px"></div>
<div class="vl" style="left:500px"></div>
<div class="vl" style="left:600px"></div>
<div class="vl" style="left:700px"></div>
<div class="vl" style="left:800px"></div>
<div class="vl" style="left:900px"></div>
<div class="vl" style="left:1000px"></div>
<div class="vl" style="left:1100px"></div>
<div class="vl" style="left:1200px"></div>
<div class="a" style="left:240px;top:250px;width:1px;height:32px;background:#c9cbd1"></div>
<div class="a" style="left:340px;top:250px;width:1px;height:32px;background:#c9cbd1"></div>
<div class="a" style="left:500px;top:250px;width:1px;height:32px;background:#c9cbd1"></div>
<div class="a" style="left:600px;top:250px;width:1px;height:32px;background:#c9cbd1"></div>
<div class="a" style="left:700px;top:250px;width:1px;height:32px;background:#c9cbd1"></div>
<div class="a" style="left:800px;top:250px;width:1px;height:32px;background:#c9cbd1"></div>
<div class="a" style="left:900px;top:250px;width:1px;height:32px;background:#c9cbd1"></div>
<div class="a" style="left:1000px;top:250px;width:1px;height:32px;background:#c9cbd1"></div>
<div class="a" style="left:1100px;top:250px;width:1px;height:32px;background:#c9cbd1"></div>
<div class="a" style="left:1200px;top:250px;width:1px;height:32px;background:#c9cbd1"></div>
<div class="a" style="left:190px;top:282px;width:1px;height:476px;background:#dcdcdc"></div>
<svg style="left:208px;top:258px;width:15px;height:14px" viewBox="0 0 16 15" fill="none" stroke="#333" stroke-width="1.150" stroke-linejoin="round"><path d="M15.10 7.50 L15.07 8.12 L14.88 8.71 L14.13 9.14 L13.37 9.45 L13.08 9.87 L12.85 10.30 L12.59 10.71 L12.38 11.17 L12.49 11.99 L12.49 12.85 L12.07 13.32 L11.55 13.65 L11.00 13.93 L10.39 14.07 L9.64 13.63 L8.99 13.13 L8.49 13.08 L8.00 13.10 L7.51 13.08 L7.01 13.13 L6.36 13.63 L5.61 14.07 L5.00 13.93 L4.45 13.65 L3.93 13.32 L3.51 12.85 L3.51 11.99 L3.62 11.17 L3.41 10.71 L3.15 10.30 L2.92 9.87 L2.63 9.45 L1.87 9.14 L1.12 8.71 L0.93 8.12 L0.90 7.50 L0.93 6.88 L1.12 6.29 L1.87 5.86 L2.63 5.55 L2.92 5.13 L3.15 4.70 L3.41 4.29 L3.62 3.83 L3.51 3.01 L3.51 2.15 L3.93 1.68 L4.45 1.35 L5.00 1.07 L5.61 0.93 L6.36 1.37 L7.01 1.87 L7.51 1.92 L8.00 1.90 L8.49 1.92 L8.99 1.87 L9.64 1.37 L10.39 0.93 L11.00 1.07 L11.55 1.35 L12.07 1.68 L12.49 2.15 L12.49 3.01 L12.38 3.83 L12.59 4.29 L12.85 4.70 L13.08 5.13 L13.37 5.55 L14.13 5.86 L14.88 6.29 L15.07 6.88Z"/><circle cx="8" cy="7.500" r="2.300"/></svg>
<div class="sort" style="left:253px"></div>
<div class="sort" style="left:353px"></div>
<div class="sort" style="left:513px"></div>
<div class="sort" style="left:613px"></div>
<div class="sort" style="left:713px"></div>
<div class="sort" style="left:813px"></div>
<div class="sort" style="left:913px"></div>
<div class="sort" style="left:1013px"></div>
<div class="sort" style="left:1113px"></div>
<div class="sort" style="left:1213px"></div>
<div class="th" style="left:267px">条码</div>
<div class="th" style="left:376px"><span class="red" style="position:absolute;left:-8.600px;top:-.5px;font-size:17px;font-weight:400;color:#fb1a1a">*</span>商品</div>
<div class="th" style="left:527px">规格型号</div>
<div class="th" style="left:636px"><span class="red" style="position:absolute;left:-8.600px;top:-.5px;font-size:17px;font-weight:400;color:#fb1a1a">*</span>采购单位</div>
<div class="th" style="left:763px"><span class="red" style="position:absolute;left:-8.600px;top:-.5px;font-size:17px;font-weight:400;color:#fb1a1a">*</span>数量</div>
<div class="th" style="left:863px">单价</div>
<div class="th" style="left:963px">金额</div>
<div class="th" style="left:1027px">收入合同</div>
<div class="th" style="left:1127px">赠品</div>
<div class="th" style="left:1728px">可用量</div>
<div class="a" style="left:442px;top:258px;width:54px;height:18px;border-radius:4px;background:#62a0f6;color:#fff;font-size:12px;line-height:20px;text-align:center">扫码录入</div>
<div class="a" style="left:341px;top:314px;width:160px;height:32px;background:#fff;border:1px solid #7d7d7d"></div>
<div class="a" style="left:1777px;top:250px;width:1px;height:508px;background:#d4d4d4"></div>
<div class="a" style="left:1778px;top:250px;width:2px;height:508px;background:#fff"></div>
<div class="a" style="left:1879px;top:282px;width:1px;height:476px;background:#e4e4e4"></div>
<div class="th" style="left:1818px;top:261.600px">操作</div>
<div class="a" style="left:1871px;top:284px;width:8.500px;height:306px;border-radius:4.500px;background:rgba(120,120,120,.55)"></div>
<div class="a" style="left:190px;top:726px;width:1588px;height:31px;background:#fdf0db"></div>
<div class="a" style="left:1780px;top:726px;width:100px;height:31px;background:#fdf0db"></div>
<div class="a" style="left:190px;top:757px;width:1690px;height:1px;background:#d9d9d9"></div>
<div class="a" style="left:240px;top:726px;width:1px;height:31px;background:#dcd6cb"></div>
<div class="a" style="left:340px;top:726px;width:1px;height:31px;background:#dcd6cb"></div>
<div class="a" style="left:500px;top:726px;width:1px;height:31px;background:#dcd6cb"></div>
<div class="a" style="left:600px;top:726px;width:1px;height:31px;background:#dcd6cb"></div>
<div class="a" style="left:700px;top:726px;width:1px;height:31px;background:#dcd6cb"></div>
<div class="a" style="left:800px;top:726px;width:1px;height:31px;background:#dcd6cb"></div>
<div class="a" style="left:900px;top:726px;width:1px;height:31px;background:#dcd6cb"></div>
<div class="a" style="left:1000px;top:726px;width:1px;height:31px;background:#dcd6cb"></div>
<div class="a" style="left:1100px;top:726px;width:1px;height:31px;background:#dcd6cb"></div>
<div class="a" style="left:1200px;top:726px;width:1px;height:31px;background:#dcd6cb"></div>
<div class="a" style="left:190px;top:726px;width:1px;height:32px;background:#dcd6cb"></div>
<div class="a" style="left:204px;top:737.700px;font-size:12px;color:#333">小计</div>
<div class="a" style="right:1132px;top:738px;font-size:12px;font-weight:700;color:#222;letter-spacing:.3px">0.00</div>
<div class="a" style="right:932px;top:738px;font-size:12px;font-weight:700;color:#222;letter-spacing:.3px">0.00</div>
<div class="a" style="right:155px;top:738px;font-size:12px;font-weight:700;color:#222;letter-spacing:.3px">0.00</div>

</div>
<!-- totals row -->
<div class="a" style="left:190px;top:780px;font-size:14px;color:#222">金额合计<span class="cn">：</span></div>
<div class="a" style="left:255px;top:779px;font-size:15px;color:#222;letter-spacing:-.4px">0.00</div>
<div class="a" style="left:293px;top:786px;width:14px;height:2px;background:#14b8b0"></div>
<div class="a" style="left:317px;top:780px;font-size:14px;color:#222">现金折扣<span class="cn">：</span></div>
<div class="ul" style="left:382px;top:801px;width:120px"></div>
<svg style="left:502px;top:780px;width:14px;height:14px" viewBox="0 0 14 14" fill="none" stroke="#333" stroke-width="1"><circle cx="7" cy="7" r="6.300"/><path d="M5 5.600c0-2.600 4-2.600 4-.2 0 1.500-2 1.600-2 3.200" stroke-linecap="round"/><circle cx="7" cy="10.600" r="0.750" fill="#333" stroke="none"/></svg>
<div class="a" style="left:526px;top:783px;width:14px;height:2px;background:#222"></div>
<div class="a" style="left:526px;top:788.500px;width:14px;height:2px;background:#222"></div>
<div class="a" style="left:550px;top:780px;font-size:14px;color:#222">成交金额<span class="cn">：</span></div>
<div class="a" style="left:615px;top:778px;font-size:15px;color:#222;letter-spacing:-.4px">0.00</div>
<div class="ul" style="left:615px;top:801px;width:160px"></div>
<!-- payment row -->
<div class="a" style="left:190px;top:827px;width:14px;height:14px;border:1px solid #b3b3b3;border-radius:3px;background:#fff"></div>
<div class="a" style="left:208px;top:828.700px;font-size:12px;color:#222">一键付款</div>
<div class="a" style="left:271px;top:828.700px;font-size:12px;color:#222">结算方式</div>
<div class="ph" style="left:329px;top:828px">选择<span class="el">...</span></div>
<svg style="left:444px;top:828px;width:12px;height:7px" viewBox="0 0 12 7" fill="none" stroke="#5b9cf5" stroke-width="1.200"><path d="M0.500 0.500L6 6l5.500-5.500"/></svg>
<div class="ul" style="left:329px;top:849px;width:133px"></div>
<div class="a" style="left:473px;top:828.700px;font-size:12px;color:#222">付款账号</div>
<div class="ph" style="left:531px;top:828px">选择<span class="el">...</span></div>
<div class="dots" style="left:647px;top:831px"><i style="left:0"></i><i style="left:4.200px"></i><i style="left:8.400px"></i></div>
<div class="ul" style="left:531px;top:849px;width:133px"></div>
<div class="ph" style="left:766px;top:828px">金额</div>
<div class="ul" style="left:675px;top:849px;width:115px"></div>
<div class="a" style="left:815px;top:828px;width:12px;height:12px;border-radius:50%;background:#5b9cf5"></div>
<div class="a" style="left:818px;top:833.400px;width:6px;height:1.200px;background:#fff"></div>
<div class="a" style="left:820.400px;top:831px;width:1.200px;height:6px;background:#fff"></div>
<div class="a" style="left:831px;top:829px;font-size:12px;color:#5b9cf5">添加</div>
<!-- summary box -->
<div class="a" style="left:1650px;top:769px;width:230px;height:85px;background:#f2f2f2"></div>
<div class="a" style="left:1670px;top:792px;font-size:14px;color:#222">进货金额</div>
<div class="a" style="left:1745px;top:788px;font-size:20.500px;color:#222;font-family:'Liberation Serif',serif">0.00</div>
<div class="a" style="left:1670px;top:819px;font-size:14px;color:#222">成交金额</div>
<div class="a" style="left:1745px;top:815px;font-size:20.500px;color:#222;font-family:'Liberation Serif',serif">0.00</div>
<!-- right float panel -->
<div class="a" style="left:1885px;top:242px;width:35px;height:36px;background:#fff;box-shadow:-1px 0 5px rgba(0,0,0,.13)"></div>
<div class="a" style="left:1885px;top:282px;width:35px;height:36px;background:#fff;box-shadow:-1px 0 5px rgba(0,0,0,.13)"></div>
<div class="a" style="left:1885px;top:322px;width:35px;height:36px;background:#3bd1ae;box-shadow:-1px 0 5px rgba(0,0,0,.13)"></div>
<svg style="left:1894.400px;top:251.300px;width:17.400px;height:18.300px" viewBox="0 0 18 19" fill="none" stroke="#4a4a4a" stroke-width="1"><path d="M3.200 0.500h11.600c1.500 0 2.700 1.200 2.700 2.700v9.800L12.500 18.500H3.200c-1.500 0-2.700-1.200-2.700-2.700V3.200C.5 1.700 1.700.5 3.200.5z"/><path d="M17.400 13.200h-3.400c-.8 0-1.400.6-1.400 1.400v3.800" stroke-width="0.900"/><text x="8.800" y="13.400" font-size="11" text-anchor="middle" fill="#444" stroke="none" font-family="Liberation Sans,Noto Sans CJK SC,sans-serif">草</text></svg>
<svg style="left:1892.600px;top:289.700px;width:21.500px;height:21.500px" viewBox="0 0 24 24" fill="none" stroke="#444" stroke-width="1.300" stroke-linecap="round" stroke-linejoin="round"><path d="M21.440 11.050l-9.190 9.190a6 6 0 0 1-8.490-8.490l9.190-9.190a4 4 0 0 1 5.660 5.660l-9.200 9.190a2 2 0 0 1-2.830-2.830l8.490-8.480"/></svg>
<svg style="left:1892.600px;top:330.400px;width:20px;height:20px" viewBox="0 0 20 20" fill="none" stroke="#fff" stroke-width="1.500" stroke-linejoin="round" stroke-linecap="round"><rect x="0.800" y="0.800" width="18.400" height="18.400" rx="2"/><path d="M11.200 8.800l5-5M12.200 3.600h4.200v4.200M8.800 11.200l-5 5M3.600 12.200v4.200h4.200"/></svg>
<!-- page scrollbar -->
<div class="a" style="left:1910.300px;top:814px;width:6.400px;height:58px;border-radius:3.200px;background:linear-gradient(#a6a6a6 0,#a6a6a6 13px,#1fc466 14px,#2bcf6c 60%,#62e37c 100%);box-shadow:0 0 0 1.500px rgba(255,255,255,.55),0 0 5px rgba(0,0,0,.18)"></div>

</div>
<div id="foot"></div>
<div class="a" style="left:190px;top:919.700px;font-size:12px;color:#333">本单上欠(保存时)</div>
<div class="a" style="left:290px;top:918px;font-size:16px;font-weight:700;color:#111;letter-spacing:-.55px">0.00</div>
<div class="a" style="left:360px;top:919.700px;font-size:12px;color:#333">本单欠款</div>
<svg style="left:410.600px;top:919.800px;width:12px;height:12px" viewBox="0 0 14 14" fill="none" stroke="#333" stroke-width="1.100"><circle cx="7" cy="7" r="6.300"/><path d="M5 5.600c0-2.600 4-2.600 4-.2 0 1.500-2 1.600-2 3.200" stroke-linecap="round"/><circle cx="7" cy="10.600" r="0.800" fill="#333" stroke="none"/></svg>
<div class="a" style="left:430px;top:918px;font-size:16px;font-weight:700;color:#111;letter-spacing:-.55px">0.00</div>
<div class="a" style="left:481px;top:919.700px;font-size:12px;color:#333">此后应付</div>
<svg style="left:530.900px;top:919.800px;width:12px;height:12px" viewBox="0 0 14 14" fill="none" stroke="#333" stroke-width="1.100"><circle cx="7" cy="7" r="6.300"/><path d="M5 5.600c0-2.600 4-2.600 4-.2 0 1.500-2 1.600-2 3.200" stroke-linecap="round"/><circle cx="7" cy="10.600" r="0.800" fill="#333" stroke="none"/></svg>
<div class="a" style="left:551px;top:918px;font-size:16px;font-weight:700;color:#111;letter-spacing:-.55px">0.00</div>

<svg style="left:1203px;top:917px;width:15px;height:15px" viewBox="0 0 15 15" fill="none" stroke="#999" stroke-width="0.900"><circle cx="7.500" cy="7.500" r="6.900"/><path d="M3.800 5.600h7.400l.6 5.200H3.200zM5.600 5.400c0-2.200 3.800-2.200 3.800 0" stroke="#aaa"/></svg>
<div class="a" style="left:1221px;top:918px;font-size:13px;color:#222">商品种类<span class="cn">：</span></div>
<div class="a" style="left:1285.500px;top:917px;font-size:14.500px;color:#f5793b">0</div>
<div class="a" style="left:1299px;top:918px;font-size:14px;color:#333">种</div>
<div class="a" style="left:1358px;top:916px;width:14px;height:14px;border-radius:3px;background:#5b9cf5"></div>
<svg style="left:1360px;top:919px;width:10px;height:8px" viewBox="0 0 9 7" fill="none" stroke="#fff" stroke-width="1.500"><path d="M0.700 3.300l2.700 2.600L8.300 0.800"/></svg>
<div class="a" style="left:1376px;top:918px;font-size:12px;color:#222">价格追踪本单</div>
<div class="a" style="left:1480px;top:906px;width:82px;height:36px;border:1px solid #b9b9b9;border-radius:3px;background:#fff;font-size:16px;color:#222;text-align:center;line-height:36px">放弃</div>
<div class="a" style="left:1574px;top:905px;width:150px;height:36px;border:1px solid #6aa3f4;border-radius:3px;background:#fff"></div>
<div class="a" style="left:1609px;top:915px;font-size:16px;color:#6aa3f4">保存草稿</div>
<svg style="left:1678px;top:921px;width:10px;height:6px" viewBox="0 0 10 6" fill="none" stroke="#6aa3f4" stroke-width="1.300"><path d="M0.500 5.500L5 1l4.500 4.500"/></svg>
<div class="a" style="left:1736px;top:905px;width:142px;height:36px;border-radius:3px;background:#62a0f6"></div>
<div class="a" style="left:1760px;top:915px;font-size:16px;font-weight:700;color:#fff">保存&amp;新增</div>
<svg style="left:1843.500px;top:921px;width:10px;height:6px" viewBox="0 0 10 6" fill="none" stroke="#fff" stroke-width="1.600"><path d="M0.500 5.500L5 1l4.500 4.500"/></svg>

</body>
</html>
